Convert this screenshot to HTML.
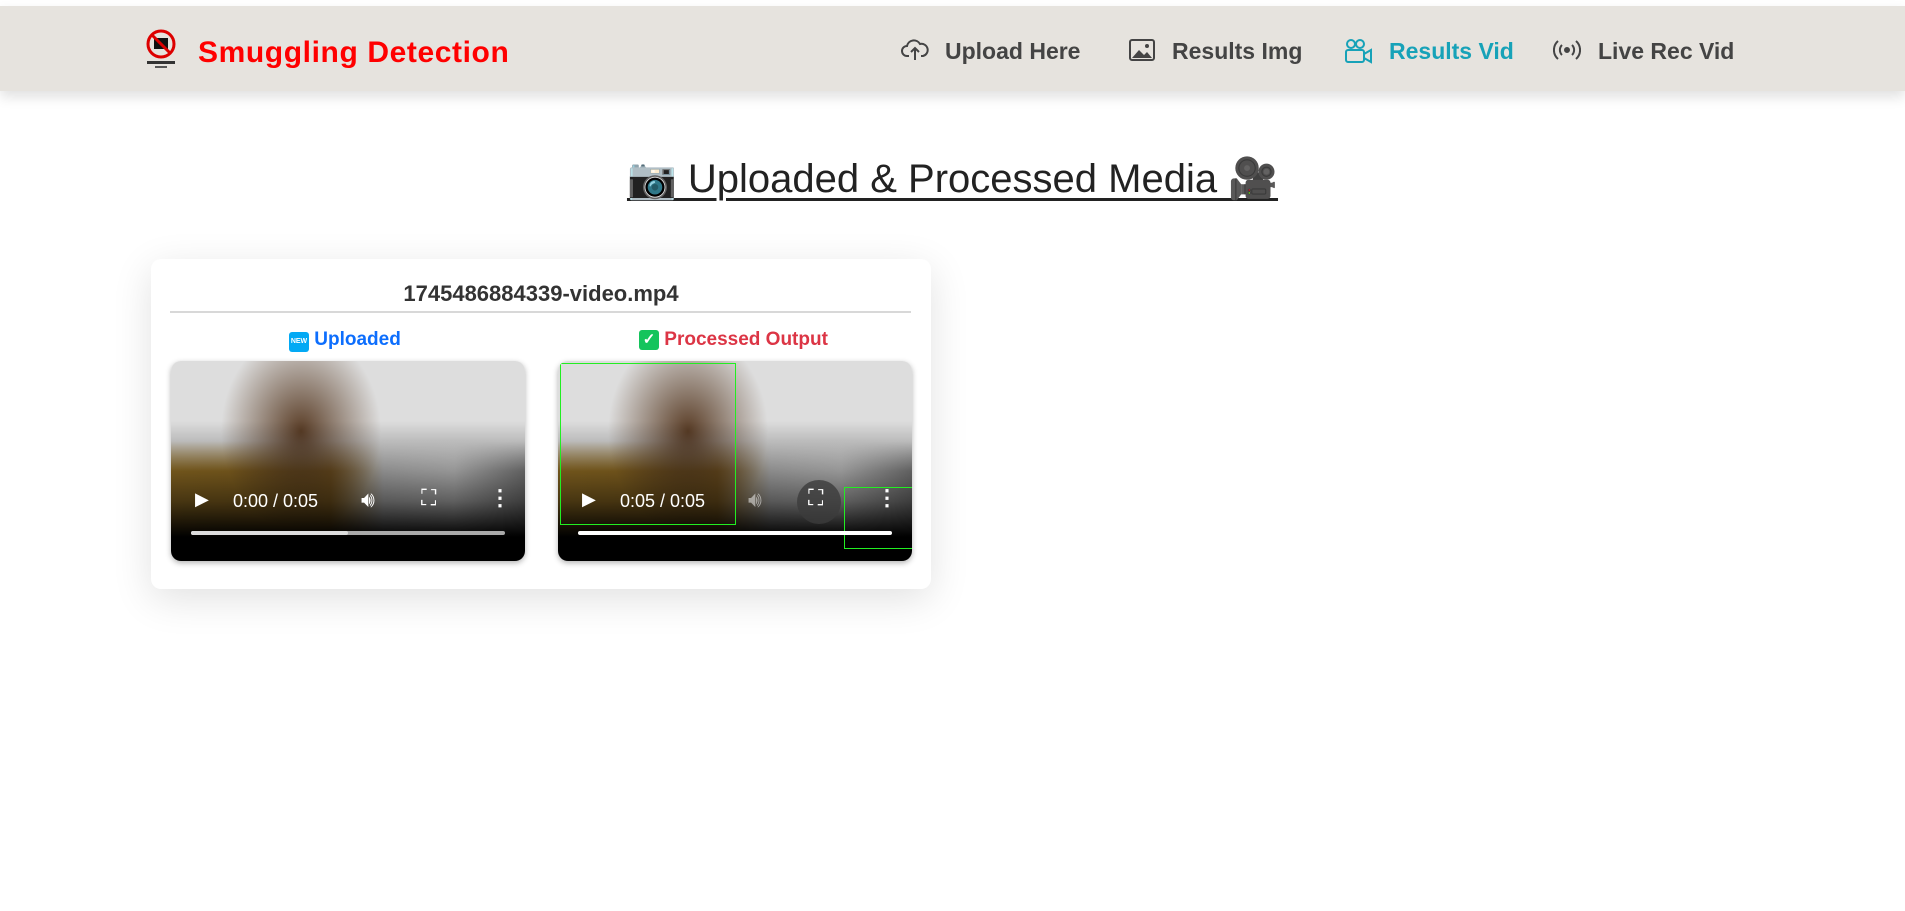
<!DOCTYPE html>
<html><head><style>
body{margin:0;width:1905px;height:911px;background:#fff;font-family:"Liberation Sans",sans-serif;position:relative;overflow:hidden}
.nav{position:absolute;left:0;top:6px;width:1905px;height:85px;background:#e6e3de;box-shadow:0 6px 12px rgba(0,0,0,.12)}
.brand{position:absolute;left:198px;top:30px;font-size:30px;font-weight:bold;color:#f00;letter-spacing:.6px}
.ni{position:absolute;top:32px;font-size:23px;font-weight:bold;color:#444}
.ic{position:absolute;top:32px}
h1{position:absolute;left:0;width:1905px;top:155px;margin:0;text-align:center;font-weight:normal;font-size:40px;color:#222}
h1 span{text-decoration:underline;text-decoration-thickness:3px;text-underline-offset:6px}
.card{position:absolute;left:151px;top:259px;width:780px;height:330px;background:#fff;border-radius:10px;box-shadow:0 10px 40px rgba(0,0,0,.12)}
.title{position:absolute;left:0;width:780px;top:22px;text-align:center;font-size:22px;font-weight:bold;color:#333}
.line{position:absolute;left:19px;width:741px;top:52px;height:2px;background:#d8d8d8}
.lab{position:absolute;top:70px;font-size:19px;font-weight:bold}
.vid{position:absolute;top:102px;width:354px;height:200px;border-radius:10px;overflow:hidden;box-shadow:0 2px 6px rgba(0,0,0,.3);
background:linear-gradient(180deg,rgba(0,0,0,0) 30%,rgba(0,0,0,.6) 70%,#000 88%),radial-gradient(ellipse 80px 100px at 130px 70px,#5a3d26,rgba(0,0,0,0)),linear-gradient(180deg,#ddd 0,#ddd 40%,rgba(0,0,0,0) 55%),linear-gradient(90deg,#b3872c 0,#a77a28 45%,#ddd 60%,#eee 80%,#999 100%)}
.vid .c{position:absolute;color:#fff;font-size:18px}
.bar{position:absolute;left:20px;right:20px;top:170px;height:4px;border-radius:2px;background:#aaa}
</style></head><body>
<div class="nav">
<svg style="position:absolute;left:143px;top:22px" width="36" height="44" viewBox="0 0 36 44"><circle cx="18" cy="16" r="13" fill="none" stroke="#d00" stroke-width="3"/><rect x="11" y="10" width="14" height="11" fill="#111"/><line x1="8" y1="6" x2="28" y2="26" stroke="#d00" stroke-width="3"/><rect x="4" y="33" width="28" height="3" fill="#333"/><rect x="12" y="38" width="12" height="2" fill="#555"/></svg>
<div class="brand">Smuggling Detection</div>
<svg class="ic" style="left:901px" width="28" height="24" viewBox="0 0 28 24" fill="none" stroke="#444" stroke-width="2"><path d="M8 18H6a5 5 0 0 1 0-10 7 7 0 0 1 13-2 5 5 0 0 1 3 12h-2"/><path d="M14 22V10M10 14l4-4 4 4"/></svg>
<div class="ni" style="left:945px">Upload Here</div>
<svg class="ic" style="left:1129px" width="26" height="24" viewBox="0 0 26 24"><rect x="1" y="2" width="24" height="20" rx="2" fill="none" stroke="#444" stroke-width="2"/><path d="M3 20l7-8 5 5 3-3 5 6z" fill="#444"/><circle cx="18" cy="8" r="2" fill="#444"/></svg>
<div class="ni" style="left:1172px">Results Img</div>
<svg class="ic" style="left:1344px" width="30" height="26" viewBox="0 0 30 26" fill="none" stroke="#17a2b8" stroke-width="2"><circle cx="7" cy="6" r="4"/><circle cx="16" cy="6" r="4"/><rect x="2" y="12" width="18" height="12" rx="2"/><path d="M20 16l7-4v12l-7-4"/></svg>
<div class="ni" style="left:1389px;color:#17a2b8">Results Vid</div>
<svg class="ic" style="left:1553px" width="28" height="24" viewBox="0 0 28 24" fill="none" stroke="#444" stroke-width="2"><circle cx="14" cy="12" r="2" fill="#444"/><path d="M9 7a7 7 0 0 0 0 10M19 7a7 7 0 0 1 0 10M5 3a12 12 0 0 0 0 18M23 3a12 12 0 0 1 0 18"/></svg>
<div class="ni" style="left:1598px">Live Rec Vid</div>
</div>
<h1><span>📷 Uploaded &amp; Processed Media 🎥</span></h1>
<div class="card">
<div class="title">1745486884339-video.mp4</div>
<div class="line"></div>
<div class="lab" style="left:138px;color:#0d6efd"><span style="display:inline-block;width:20px;height:20px;background:#03a9f4;color:#fff;font-size:7px;line-height:20px;text-align:center;border-radius:3px;vertical-align:2px">NEW</span> Uploaded</div>
<div class="lab" style="left:488px;color:#dc3545"><span style="display:inline-block;width:20px;height:20px;background:#14c45c;color:#fff;font-size:15px;line-height:20px;text-align:center;border-radius:3px;vertical-align:1px">✓</span> Processed Output</div>
<div class="vid" style="left:20px">
<div class="c" style="left:24px;top:128px">▶</div><div class="c" style="left:62px;top:130px">0:00 / 0:05</div>
<div class="c" style="left:190px;top:126px;font-size:22px">🔊︎</div><div class="c" style="left:250px;top:124px;font-size:22px">⛶</div><div class="c" style="left:318px;top:124px;font-weight:bold;font-size:22px">⋮</div>
<div class="bar"><div style="width:50%;height:4px;background:#ddd;border-radius:2px"></div></div></div>
<div class="vid" style="left:407px">
<div style="position:absolute;left:2px;top:2px;width:174px;height:160px;border:1px solid #2e2"></div>
<div style="position:absolute;left:286px;top:126px;width:70px;height:60px;border:1px solid #2e2"></div>
<div style="position:absolute;left:239px;top:119px;width:44px;height:44px;border-radius:50%;background:rgba(60,60,60,.8)"></div>
<div class="c" style="left:24px;top:128px">▶</div><div class="c" style="left:62px;top:130px">0:05 / 0:05</div>
<div class="c" style="left:190px;top:126px;opacity:.5;font-size:22px">🔊︎</div><div class="c" style="left:250px;top:124px;font-size:22px">⛶</div><div class="c" style="left:318px;top:124px;font-weight:bold;font-size:22px">⋮</div>
<div class="bar" style="background:#fff"></div></div>
</div>
</body></html>
